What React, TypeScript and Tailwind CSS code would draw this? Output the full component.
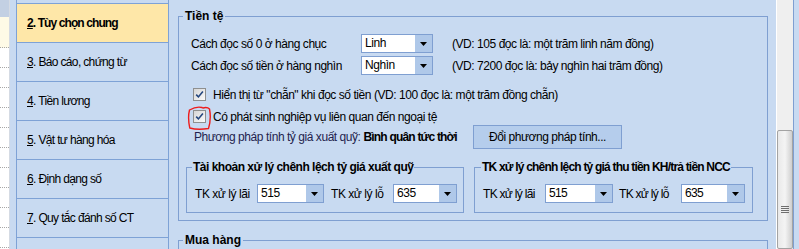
import React from "react";

const navItems = [
  { n: "2", label: "Tùy chọn chung", active: true },
  { n: "3", label: "Báo cáo, chứng từ" },
  { n: "4", label: "Tiền lương" },
  { n: "5", label: "Vật tư hàng hóa" },
  { n: "6", label: "Định dạng số" },
  { n: "7", label: "Quy tắc đánh số CT" },
  { n: "8", label: "" },
];

function Combo({ value, className }: { value: string; className: string }) {
  return (
    <div className={`flex h-[19px] shrink-0 items-stretch border border-[#7f9fd1] bg-white ${className}`}>
      <span className="flex-1 pl-[3px] text-[12px] leading-[16px] text-black">{value}</span>
      <span className="flex w-[17px] items-center justify-center bg-[#afc8e9]">
        <svg width="7" height="4" viewBox="0 0 7 4">
          <path d="M0 0h7L3.5 4z" fill="#000" />
        </svg>
      </span>
    </div>
  );
}

function Check() {
  return (
    <span className="flex h-[13px] w-[13px] shrink-0 items-center justify-center border border-[#8e8f8f] bg-linear-to-br from-[#d6d6d6] to-[#fafafa]">
      <svg width="9" height="9" viewBox="0 0 9 9">
        <path d="M1.2 4.6l2.2 2.3L7.9 1.4" fill="none" stroke="#24467e" strokeWidth="1.6" />
      </svg>
    </span>
  );
}

export default function App() {
  return (
    <div className="flex h-[249px] w-[799px] overflow-hidden whitespace-nowrap bg-[#c8daf1] font-['Liberation_Sans',Arial,sans-serif] text-[11px] text-black">
      {/* tree strip on the far left */}
      <div className="flex w-[16px] shrink-0">
        <div className="flex w-[10px] flex-col border-r border-[#d5dbe4] bg-white">
          <div className="h-[17px] bg-[#c3d0e3]" />
          <div className="h-[31px] border-b border-dotted border-[#a8a8a8] bg-[#fefae6]" />
          {Array.from({ length: 10 }).map((_, i) => (
            <div key={i} className="h-[20px] border-b border-dotted border-[#a8a8a8]" />
          ))}
        </div>
        <div className="w-[6px]" />
      </div>

      {/* settings nav */}
      <div className="flex w-[153px] shrink-0 flex-col border-x border-[#7ea2d6] bg-[#c8daf1] text-[12px]">
        <div className="h-[4px] shrink-0 border-b border-[#7ea2d6]" />
        {navItems.map((it) => (
          <div
            key={it.n}
            className={`flex h-[39px] shrink-0 items-center border-b border-[#7ea2d6] pl-[10px] ${
              it.active ? "bg-[#fee7a8] font-bold tracking-[-0.9px]" : "tracking-[-0.65px]"
            }`}
          >
            {it.label && (
              <span>
                <span className="underline">{it.n}</span>. {it.label}
              </span>
            )}
          </div>
        ))}
      </div>

      {/* main settings area */}
      <div className="flex w-[607px] shrink-0 flex-col pl-[9px] pr-[8px] pt-[8px]">
        <fieldset className="border border-[#7f9fd1]">
          <legend className="ml-[4px] px-[2px] text-[12px] font-bold leading-[16px]">Tiền tệ</legend>
          <div className="flex flex-col pb-[7px] text-[12px] tracking-[-0.45px]">
            <div className="mt-[10px] flex h-[19px] items-center pl-[12px]">
              <span className="w-[170px] shrink-0">Cách đọc số 0 ở hàng chục</span>
              <Combo value="Linh" className="w-[72px]" />
              <span className="ml-[19px]">(VD: 105 đọc là: một trăm linh năm đồng)</span>
            </div>
            <div className="mt-[3px] flex h-[19px] items-center pl-[12px]">
              <span className="w-[170px] shrink-0">Cách đọc số tiền ở hàng nghìn</span>
              <Combo value="Nghìn" className="w-[72px]" />
              <span className="ml-[19px]">(VD: 7200 đọc là: bảy nghìn hai trăm đồng)</span>
            </div>
            <div className="mt-[13px] flex h-[13px] items-center gap-[7px] pl-[14px]">
              <Check />
              <span>Hiển thị từ "chẵn" khi đọc số tiền (VD: 100 đọc là: một trăm đồng chẵn)</span>
            </div>
            <div className="relative mt-[9px] flex h-[13px] items-center gap-[7px] pl-[14px]">
              <Check />
              <span>Có phát sinh nghiệp vụ liên quan đến ngoại tệ</span>
              <svg
                className="absolute left-[8px] top-[-5px]"
                width="26"
                height="26"
                viewBox="0 0 26 26"
              >
                <path
                  d="M15 2.5 C 11 1.5, 6 3, 2.5 5 C 1.2 10, 1.5 17, 2.8 23 C 8 24.5, 15 24.5, 21.5 23.5 C 23.5 17, 23.5 9, 22.5 4 C 21 2.5, 18.5 2.3, 16 3"
                  fill="none"
                  stroke="#ee1c1c"
                  strokeWidth="1.4"
                  strokeLinecap="round"
                />
              </svg>
            </div>
            <div className="mt-[2px] flex h-[24px] items-center">
              <span className="w-[294px] shrink-0 pl-[15px] text-[#241f4e]">
                Phương pháp tính tỷ giá xuất quỹ:{" "}
                <b className="tracking-[-0.8px] text-black">Bình quân tức thời</b>
              </span>
              <button className="h-[24px] w-[149px] border border-[#7f9fd1] bg-[#b5cdec] text-[12px] tracking-[-0.45px] text-black">
                Đổi phương pháp tính...
              </button>
            </div>
            <div className="mt-[10px] flex gap-[10px] pl-[7px]">
              <fieldset className="w-[278px] border border-[#7f9fd1]">
                <legend className="ml-[5px] px-[1px] font-bold leading-[16px] tracking-[-0.5px]">
                  Tài khoản xử lý chênh lệch tỷ giá xuất quỹ
                </legend>
                <div className="mt-[9px] mb-[9px] flex h-[19px] items-center pl-[8px]">
                  <span className="w-[62px] shrink-0">TK xử lý lãi</span>
                  <Combo value="515" className="w-[67px]" />
                  <span className="w-[69px] shrink-0 pl-[7px]">TK xử lý lỗ</span>
                  <Combo value="635" className="w-[64px]" />
                </div>
              </fieldset>
              <fieldset className="w-[279px] border border-[#7f9fd1]">
                <legend className="ml-[6px] px-[1px] font-bold leading-[16px] tracking-[-0.8px]">
                  TK xử lý chênh lệch tỷ giá thu tiền KH/trả tiền NCC
                </legend>
                <div className="mt-[9px] mb-[9px] flex h-[19px] items-center pl-[8px] tracking-[-0.7px]">
                  <span className="w-[62px] shrink-0">TK xử lý lãi</span>
                  <Combo value="515" className="w-[68px]" />
                  <span className="w-[68px] shrink-0 pl-[6px]">TK xử lý lỗ</span>
                  <Combo value="635" className="w-[64px]" />
                </div>
              </fieldset>
            </div>
          </div>
        </fieldset>

        <fieldset className="mt-[11px] h-[60px] shrink-0 border border-[#7f9fd1]">
          <legend className="ml-[4px] px-[2px] text-[12px] font-bold leading-[16px]">Mua hàng</legend>
        </fieldset>
      </div>

      {/* vertical scrollbar */}
      <div className="flex w-[18px] shrink-0 flex-col border-l border-r border-l-white border-r-[#7f9fd1] bg-[#efefef]">
        <div className="mt-[130px] flex h-[160px] flex-col items-center rounded-[2px] border border-[#a3a3a3] bg-linear-to-r from-[#e9e9e9] via-[#f4f4f4] to-[#cfcfcf]">
          <div className="mt-[75px] flex flex-col gap-[1px]">
            <div className="h-[1px] w-[8px] bg-[#6f6f6f]" />
            <div className="h-[1px] w-[8px] bg-[#6f6f6f]" />
            <div className="h-[1px] w-[8px] bg-[#6f6f6f]" />
            <div className="h-[1px] w-[8px] bg-[#6f6f6f]" />
          </div>
        </div>
      </div>
      <div className="w-[5px] shrink-0" />
    </div>
  );
}
